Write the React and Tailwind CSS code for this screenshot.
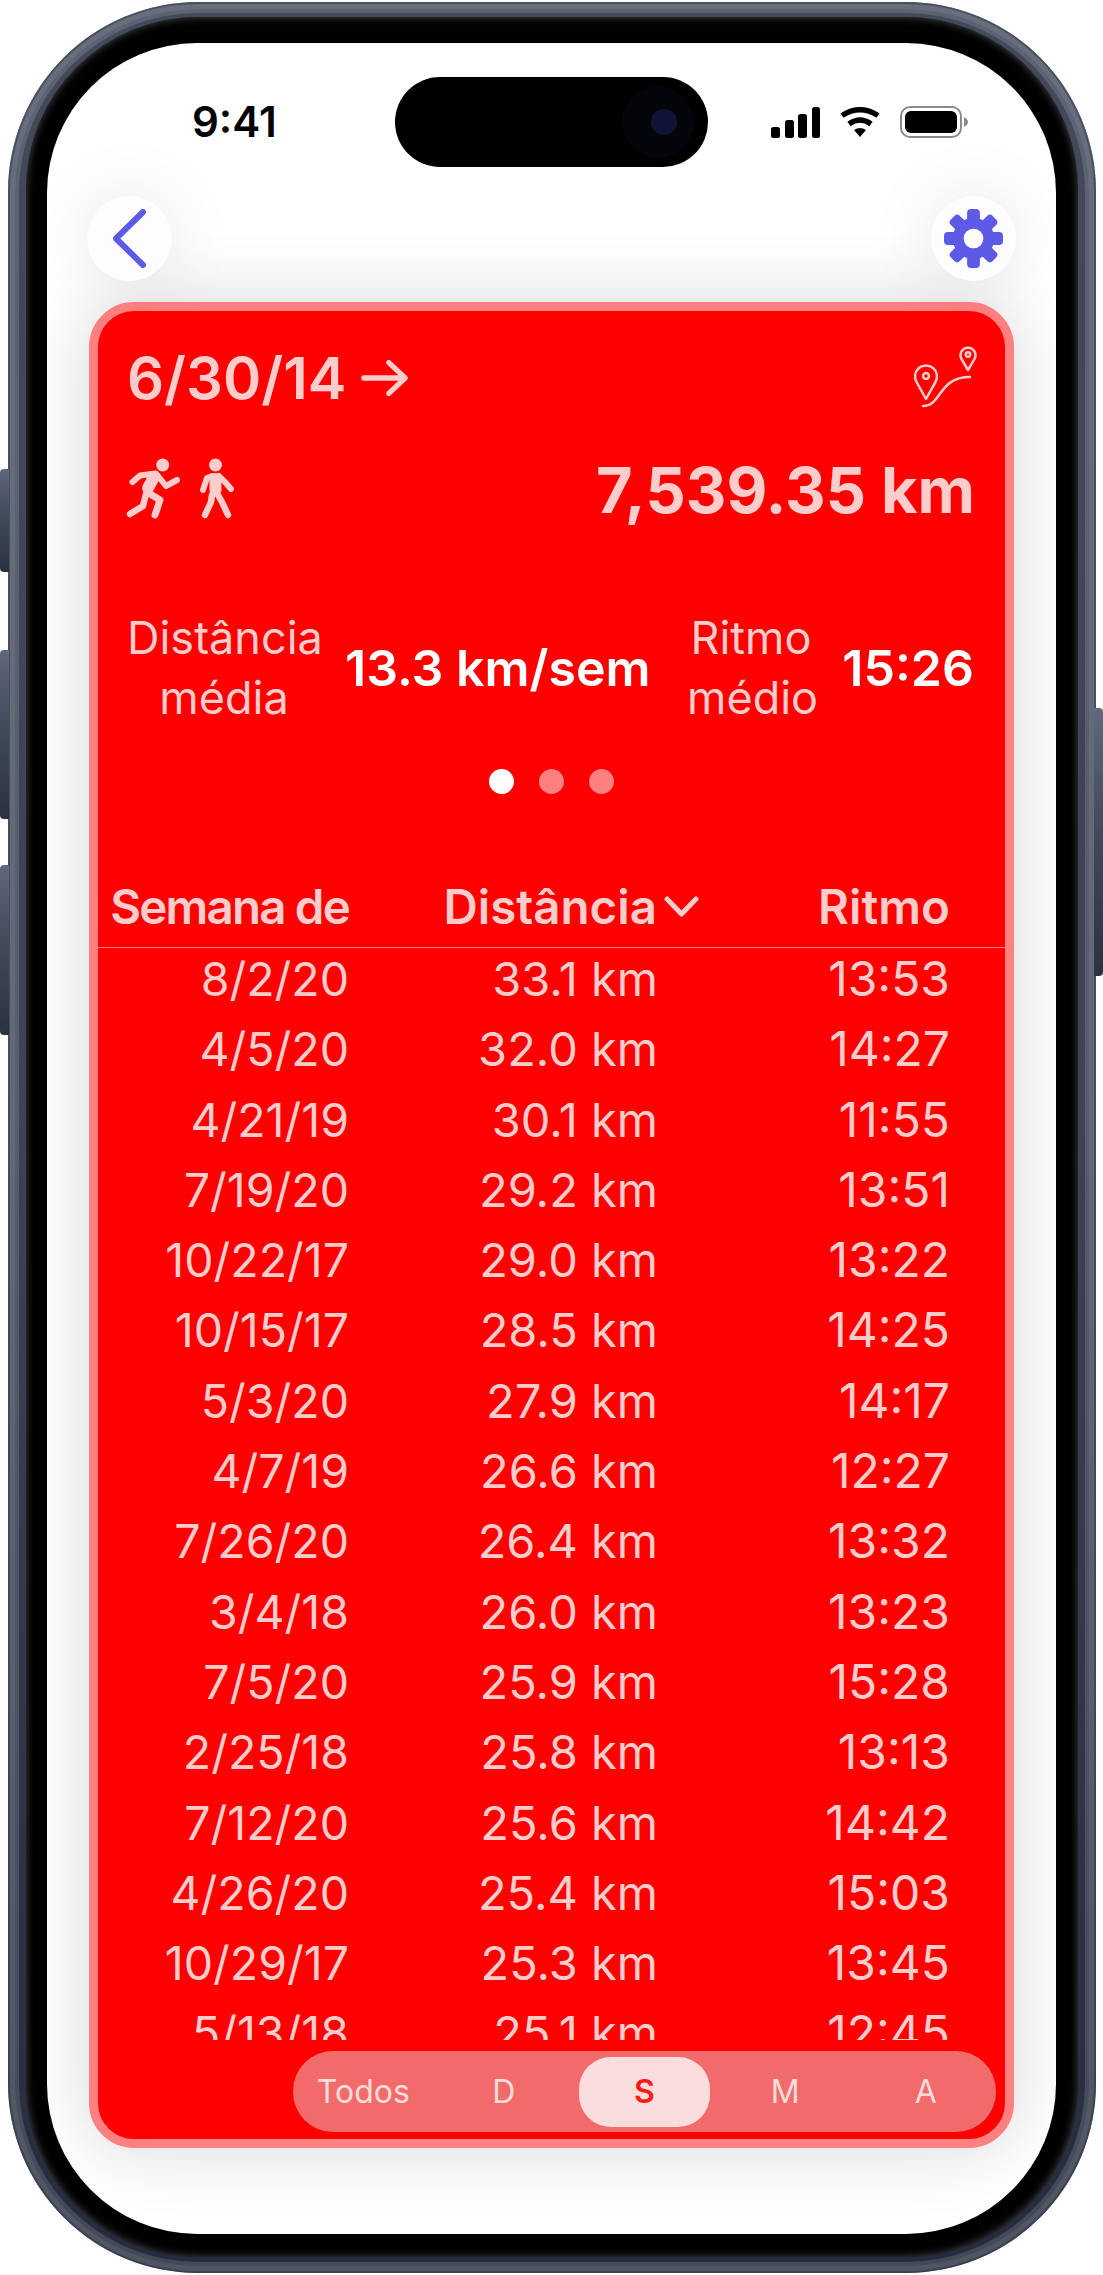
import React from "react";

const ROWS = [
  ["8/2/20", "33.1 km", "13:53"],
  ["4/5/20", "32.0 km", "14:27"],
  ["4/21/19", "30.1 km", "11:55"],
  ["7/19/20", "29.2 km", "13:51"],
  ["10/22/17", "29.0 km", "13:22"],
  ["10/15/17", "28.5 km", "14:25"],
  ["5/3/20", "27.9 km", "14:17"],
  ["4/7/19", "26.6 km", "12:27"],
  ["7/26/20", "26.4 km", "13:32"],
  ["3/4/18", "26.0 km", "13:23"],
  ["7/5/20", "25.9 km", "15:28"],
  ["2/25/18", "25.8 km", "13:13"],
  ["7/12/20", "25.6 km", "14:42"],
  ["4/26/20", "25.4 km", "15:03"],
  ["10/29/17", "25.3 km", "13:45"],
  ["5/13/18", "25.1 km", "12:45"],
];

const SideButton = ({ className }) => (
  <div className={`absolute w-[9px] bg-gradient-to-b from-[#5f687c] via-[#3f4859] to-[#2a3242] ${className}`} />
);

const Gear = () => (
  <svg width="59" height="59" viewBox="-30 -30 60 60" fill="#5e5ae8">
    <circle r="21" />
    {[0, 45, 90, 135, 180, 225, 270, 315].map((deg) => (
      <rect key={deg} x="-6.5" y="-30" width="13" height="16" rx="4" transform={`rotate(${deg})`} />
    ))}
    <circle r="10" fill="#fdfdfd" />
  </svg>
);

const Runner = () => (
  <svg width="60" height="80" viewBox="0 0 60 80" fill="none" stroke="#ffcccc" strokeLinecap="round" strokeLinejoin="round">
    <circle cx="42.7" cy="15" r="6.5" fill="#ffcccc" stroke="none" />
    <path d="M34 27L28 38" strokeWidth="12" />
    <path d="M12.5 32L20 25.5L36 23.5L46 36L57 30" strokeWidth="6" />
    <path d="M26 44L23 56L10 64" strokeWidth="6.5" />
    <path d="M27 42L40 50L35 65" strokeWidth="7" />
  </svg>
);

const Walker = () => (
  <svg width="60" height="80" viewBox="60 0 60 80" fill="none" stroke="#ffcccc" strokeLinecap="round" strokeLinejoin="round">
    <circle cx="95.5" cy="15" r="6.5" fill="#ffcccc" stroke="none" />
    <path d="M95.5 29L95.5 40" strokeWidth="12" />
    <path d="M92 26L87 28L83 40" strokeWidth="6" />
    <path d="M99 26L105 32L111 39" strokeWidth="6" />
    <path d="M92 45L91 52L85 65" strokeWidth="6.5" />
    <path d="M98 45L102 52L108 65" strokeWidth="6.5" />
  </svg>
);

const RouteIcon = () => (
  <svg width="66" height="63" viewBox="0 0 66 63" fill="none" stroke="#ffcccc" strokeWidth="2.5" strokeLinecap="round" strokeLinejoin="round">
    <path d="M14 54L4.5 37A11 11 0 1 1 23.5 37Z" />
    <circle cx="14" cy="31" r="3" />
    <path d="M56 25L49.5 14A7.5 7.5 0 1 1 62.5 14Z" />
    <circle cx="56" cy="9.5" r="2.2" />
    <path d="M11 61C30 61 26 32 58 32" />
  </svg>
);

const StatusIcons = () => (
  <div className="flex items-center gap-[19px]">
    <svg width="49" height="31" viewBox="0 0 49 31" fill="#000">
      <rect x="0" y="20" width="9" height="11" rx="2.5" />
      <rect x="14" y="13" width="9" height="18" rx="2.5" />
      <rect x="27" y="7" width="9" height="24" rx="2.5" />
      <rect x="41" y="0" width="8" height="31" rx="2.5" />
    </svg>
    <svg width="42" height="31" viewBox="0 0 42 31" fill="none" stroke="#000" strokeWidth="5.5">
      <path d="M3 8.5Q21 -3 39 8.5" />
      <path d="M10 17Q21 9 32 17" />
      <path d="M15 23Q21 19 27 23L21 30Z" fill="#000" stroke="none" />
    </svg>
    <svg width="68" height="32" viewBox="0 0 68 32" fill="none">
      <rect x="1" y="1" width="60" height="30" rx="9" stroke="#8a8a8a" strokeWidth="2" />
      <rect x="5" y="5" width="52" height="22" rx="6" fill="#000" />
      <path d="M64 11C66.5 12 68 14 68 16C68 18 66.5 20 64 21Z" fill="#8a8a8a" />
    </svg>
  </div>
);

const App = () => {
  return (
    <div className="relative w-[1103px] h-[2275px] bg-white pl-[8px] pt-[2px] font-['Inter','Liberation_Sans',sans-serif] overflow-hidden">
      <SideButton className="left-0 top-[469px] h-[103px] rounded-l-[4px]" />
      <SideButton className="left-0 top-[650px] h-[169px] rounded-l-[4px]" />
      <SideButton className="left-0 top-[865px] h-[170px] rounded-l-[4px]" />
      <SideButton className="right-0 top-[708px] h-[268px] rounded-r-[4px]" />

      {/* phone body */}
      <div className="w-[1088px] h-[2271px] rounded-[190px] bg-gradient-to-b from-[#535c70] via-[#4a5366] to-[#2c3446] pt-[15px] px-[18px] pb-[16px] shadow-[inset_0_0_0_2px_rgba(20,26,40,0.35),inset_0_0_0_7px_rgba(255,255,255,0.07),inset_0_0_0_11px_rgba(255,255,255,0.14),inset_0_0_0_18px_rgba(15,20,32,0.25)]">
        <div className="h-full rounded-[172px] bg-black pt-[26px] pl-[21px] pr-[22px] pb-[23px] shadow-[inset_0_0_9px_#4a4a4a]">
          <div className="h-full rounded-[150px] bg-white overflow-hidden">
            {/* status bar */}
            <div className="flex items-center pt-[34px] h-[124px]">
              <div className="w-[348px] pl-[145px] text-[42px] leading-[50px] font-semibold text-black">9:41</div>
              <div className="w-[313px] h-[90px] rounded-[45px] bg-black flex items-center justify-end pr-[14px]">
                <div className="w-[72px] h-[72px] rounded-full bg-[#04050a] flex items-center justify-center pl-[12px]">
                  <div className="w-[26px] h-[26px] rounded-full bg-[#10143a]" />
                </div>
              </div>
              <div className="pl-[63px] flex-1">
                <StatusIcons />
              </div>
            </div>

            {/* nav buttons */}
            <div className="mt-[29px] pl-[40px] pr-[40px] flex items-center justify-between">
              <div className="w-[85px] h-[85px] rounded-full bg-[#fdfdfd] flex items-center justify-center shadow-[0_0_70px_rgba(0,0,0,0.1)]">
                <svg width="33" height="59" viewBox="0 0 33 59" fill="none" stroke="#5e5ae8" strokeWidth="6" strokeLinecap="round" strokeLinejoin="round">
                  <path d="M30 3L3 29.5L30 56" />
                </svg>
              </div>
              <div className="w-[85px] h-[85px] rounded-full bg-[#fdfdfd] flex items-center justify-center shadow-[0_0_70px_rgba(0,0,0,0.1)]">
                <Gear />
              </div>
            </div>

            {/* card */}
            <div className="mt-[21px] ml-[42px] mr-[42px] h-[1846px] rounded-[45px] border-[9px] border-[#ff8080] bg-[#ff0000] overflow-hidden flex flex-col text-[#ffcccc] shadow-[0_0_70px_rgba(0,0,0,0.16)]">
              <div className="pl-[29px] pr-[27px] pt-[31px] flex items-start justify-between">
                <div className="flex items-center gap-[15px]">
                  <span className="text-[58px] leading-[72px] font-semibold">6/30/14</span>
                  <svg width="48" height="40" viewBox="0 0 50 40" fill="none" stroke="#ffcccc" strokeWidth="5.5" strokeLinecap="round" strokeLinejoin="round">
                    <path d="M3 20H45M29 4L46 20L29 36" />
                  </svg>
                </div>
                <div className="mt-[3px]">
                  <RouteIcon />
                </div>
              </div>

              <div className="mt-[40px] pl-[22px] pr-[30px] h-[72px] flex items-center justify-between">
                <div className="flex items-center">
                  <Runner />
                  <Walker />
                </div>
                <span className="text-[63px] leading-[72px] font-bold">7,539.35 km</span>
              </div>

              <div className="mt-[82px] pl-[29px] grid grid-cols-[194px_24px_302px_40px_128px_25px_134px] items-center">
                <div className="text-[45px] leading-[60px] text-center">Distância<br />média</div>
                <div />
                <div className="text-[50px] leading-[60px] font-semibold text-white text-center whitespace-nowrap">13.3 km/sem</div>
                <div />
                <div className="text-[45px] leading-[60px] text-center">Ritmo<br />médio</div>
                <div />
                <div className="text-[50px] leading-[60px] font-semibold text-white text-right">15:26</div>
              </div>

              <div className="mt-[41px] flex justify-center gap-[25px]">
                <div className="w-[25px] h-[25px] rounded-full bg-white" />
                <div className="w-[25px] h-[25px] rounded-full bg-[#ff8080]" />
                <div className="w-[25px] h-[25px] rounded-full bg-[#ff8080]" />
              </div>

              <div className="mt-[78px] pb-[5px] grid grid-cols-[251px_308px_293px] text-[47.5px] leading-[70px] font-semibold text-right border-b border-[#ff8080]">
                <div className="whitespace-nowrap tracking-[-1.8px]">Semana de</div>
                <div className="relative">
                  Distância
                  <svg className="absolute left-full top-[24px] ml-[7px]" width="35" height="21" viewBox="0 0 35 21" fill="none" stroke="#ffcccc" strokeWidth="5" strokeLinecap="round" strokeLinejoin="round">
                    <path d="M3 3L17.5 18L32 3" />
                  </svg>
                </div>
                <div>Ritmo</div>
              </div>

              <div className="h-[1092px] overflow-hidden">
                <div className="-mt-[4px]">
                  {ROWS.map((row) => (
                    <div key={row[0]} className="grid grid-cols-[251px_309px_292px] h-[70.3px] leading-[70px] text-right">
                      <div className="text-[46.5px]">{row[0]}</div>
                      <div className="text-[47px]">{row[1]}</div>
                      <div className="text-[48px]">{row[2]}</div>
                    </div>
                  ))}
                </div>
              </div>

              {/* period picker */}
              <div className="mt-[11px] self-end mr-[9px] w-[703px] h-[81px] rounded-[40px] bg-[#f26b6b] grid grid-cols-5 items-center text-center text-[32px] text-[#ffdcdc]">
                <span>Todos</span>
                <span>D</span>
                <span className="mx-[5px] h-[70px] rounded-[32px] bg-[#fbdddd] text-[#ff1a1a] font-semibold flex items-center justify-center">S</span>
                <span>M</span>
                <span>A</span>
              </div>
            </div>
          </div>
        </div>
      </div>
    </div>
  );
};

export default App;
